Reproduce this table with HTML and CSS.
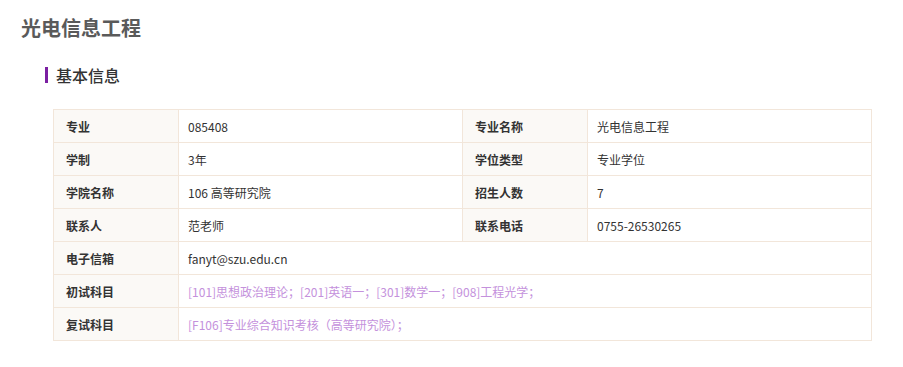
FILE: index.html
```html
<!DOCTYPE html>
<html lang="zh">
<head>
<meta charset="utf-8">
<link rel="stylesheet" href="styles.css">
</head>
<body>
<div class="page">
  <h1 class="title">光电信息工程</h1>
  <h2 class="section">基本信息</h2>
  <table class="info">
    <colgroup>
      <col class="c-label"><col class="c-val"><col class="c-label"><col class="c-val">
    </colgroup>
    <tr><th>专业</th><td>085408</td><th>专业名称</th><td>光电信息工程</td></tr>
    <tr><th>学制</th><td>3年</td><th>学位类型</th><td>专业学位</td></tr>
    <tr><th>学院名称</th><td>106 高等研究院</td><th>招生人数</th><td>7</td></tr>
    <tr><th>联系人</th><td>范老师</td><th>联系电话</th><td>0755-26530265</td></tr>
    <tr><th>电子信箱</th><td colspan="3">fanyt@szu.edu.cn</td></tr>
    <tr><th>初试科目</th><td colspan="3" class="link">[101]思想政治理论；[201]英语一；[301]数学一；[908]工程光学；</td></tr>
    <tr><th>复试科目</th><td colspan="3" class="link">[F106]专业综合知识考核（高等研究院）；</td></tr>
  </table>
</div>
</body>
</html>
```
FILE: styles.css
```css
html, body {
  margin: 0;
  padding: 0;
  background: #fff;
}
body {
  font-family: "Noto Sans CJK SC", "Noto Sans", sans-serif;
  color: #333;
}
.page {
  padding: 14px 0 0 21px;
}
.title {
  margin: 0;
  font-size: 20px;
  line-height: 28px;
  font-weight: 700;
  color: #5a5a5a;
}
.section {
  margin: 25px 0 0 24px;
  padding-left: 8px;
  border-left: 3px solid #7b1fa2;
  font-size: 16px;
  line-height: 16px;
  font-weight: 500;
  color: #333;
}
.info {
  margin: 26px 0 0 32px;
  width: 819px;
  border-collapse: collapse;
  table-layout: fixed;
  font-size: 12px;
}
.c-label { width: 125px; }
.c-val { width: 284px; }
.info th, .info td {
  border: 1px solid #f2e6da;
  height: 33px;
  padding: 0 8px;
  text-align: left;
  vertical-align: middle;
  box-sizing: border-box;
}
.info th {
  background: #fbf9f6;
  font-weight: 700;
  padding-left: 12px;
  color: #333;
}
.info td {
  color: #333;
  padding-left: 9px;
}
.info td.link {
  color: #c491dc;
}
```
